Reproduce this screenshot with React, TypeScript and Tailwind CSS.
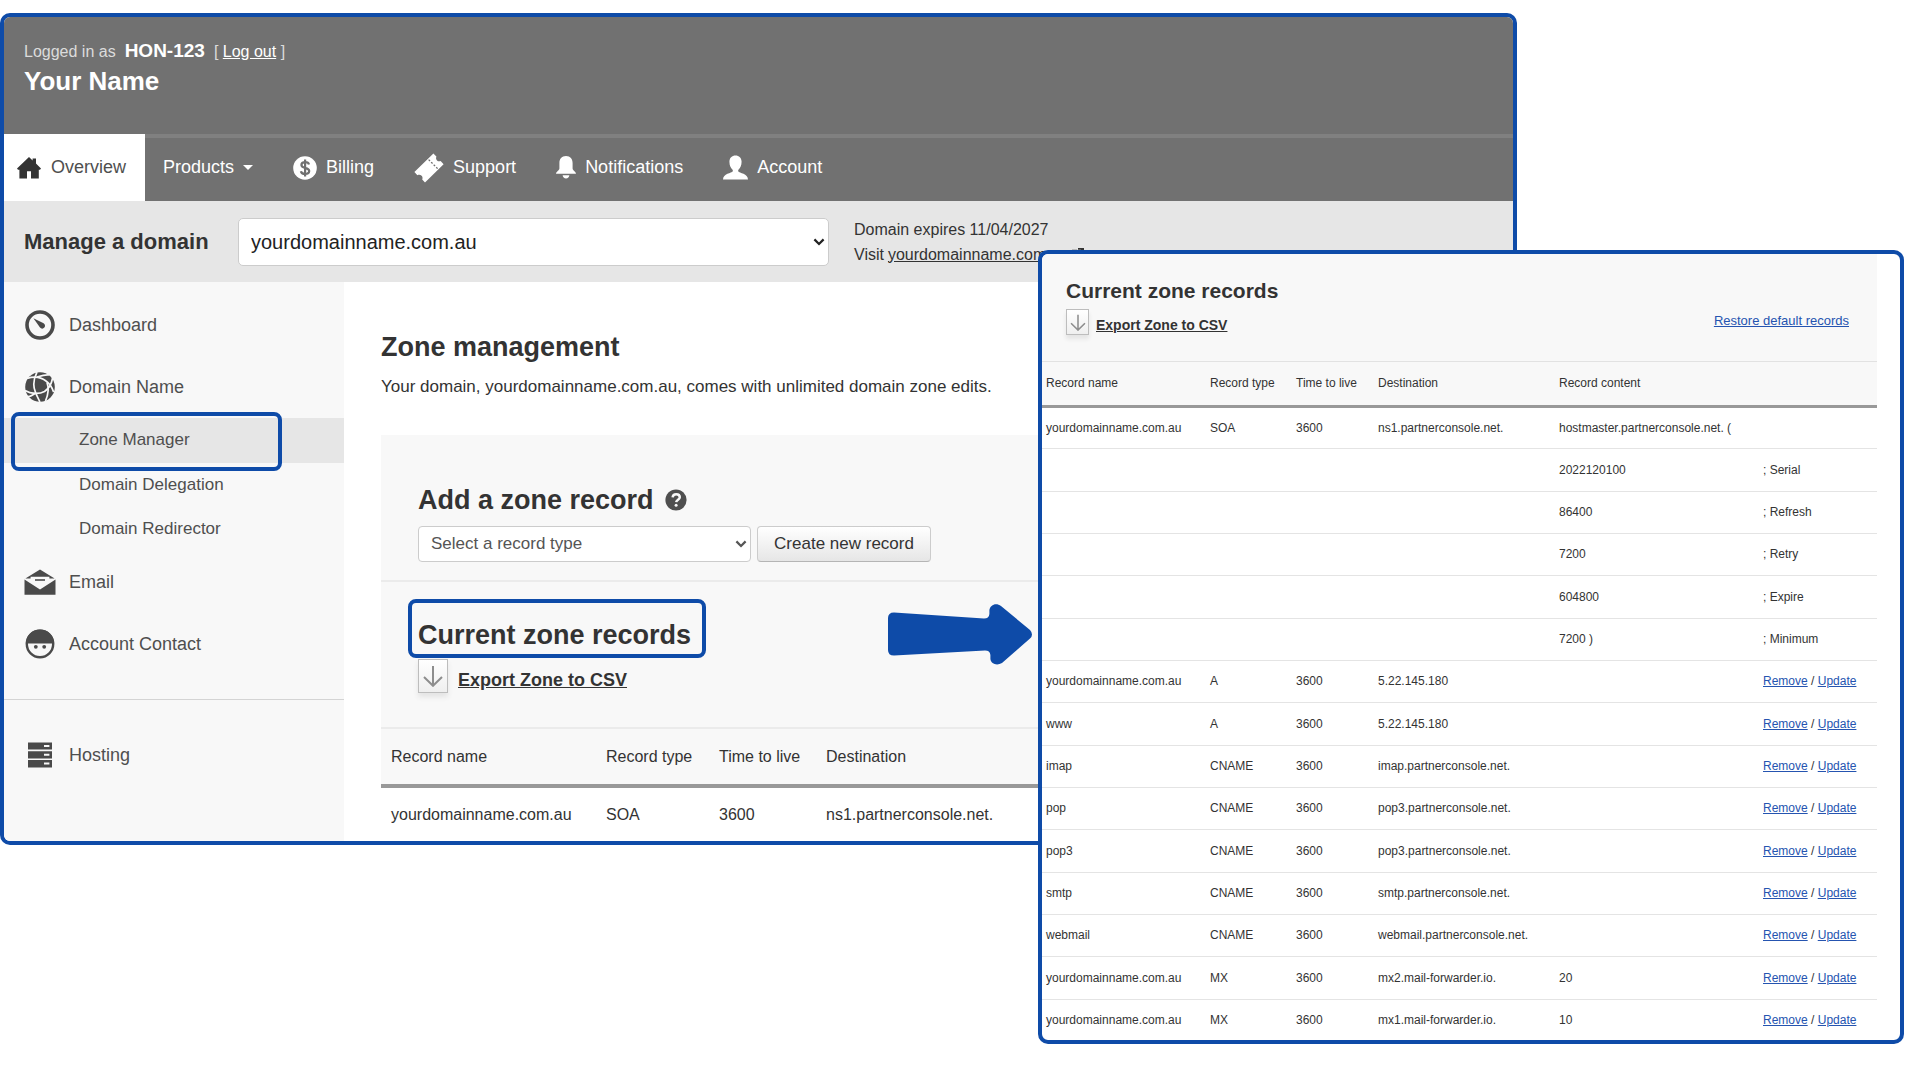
import type { ReactNode } from "react";

function HomeIcon() {
  return (
    <svg width="24" height="22" viewBox="0 0 24 22" fill="#333333" aria-hidden="true">
      <path d="M12 0 15.6 3.4V1.4H19V6.6L24 11.6 23 12.8H21.8V21.6H14V14.2H10V21.6H2.4V12.8H1L0 11.6Z" />
    </svg>
  );
}

function BillingIcon() {
  return (
    <svg width="24" height="24" viewBox="0 0 24 24" fill="none" aria-hidden="true">
      <circle cx="12" cy="12" r="11.8" fill="#ffffff" />
      <path
        d="M16 8.4C15.6 6.8 14 6.2 12.2 6.2 10 6.2 8.4 7.2 8.4 9 8.4 13 16.2 10.8 16.2 15 16.2 16.9 14.4 17.9 12.2 17.9 10 17.9 8.2 17 7.9 15.2M12.1 3.6V20.4"
        stroke="#707070"
        strokeWidth="2.2"
      />
    </svg>
  );
}

function TicketIcon() {
  return (
    <svg width="30" height="30" viewBox="0 0 30 30" fill="none" aria-hidden="true">
      <path
        d="M19.4.4 22.4 3.6C21.8 5.2 22 6.4 23 7.4 24 8.4 25.2 8.6 26.6 8L29.6 11.2 11 29.6 8.2 26.6C8.8 25.2 8.6 23.8 7.6 22.8 6.4 21.6 5 21.4 3.4 22.2L.4 19Z"
        fill="#ffffff"
      />
      <path d="M14.6 6.6 23.6 15.6" stroke="#707070" strokeWidth="1.3" strokeDasharray="2 1.6" />
    </svg>
  );
}

function BellIcon() {
  return (
    <svg width="20" height="23" viewBox="0 0 20 23" fill="#ffffff" aria-hidden="true">
      <path d="M10 0C14.4 0 16.6 3 16.6 7V12.4C16.6 14.4 20 15.4 20 17.8H0C0 15.4 3.4 14.4 3.4 12.4V7C3.4 3 5.6 0 10 0Z" />
      <path d="M6.6 19.2H13.4C13.2 21.2 11.8 22.4 10 22.4S6.8 21.2 6.6 19.2Z" />
    </svg>
  );
}

function PersonIcon() {
  return (
    <svg width="25" height="25" viewBox="0 0 25 25" fill="#ffffff" aria-hidden="true">
      <path d="M12.5.4C16 .4 18.6 2.8 18.6 6.8 18.6 10.6 17 13.6 15.2 15V16.2C16.4 18.2 25 18.4 25 24.6H0C0 18.4 8.6 18.2 9.8 16.2V15C8 13.6 6.4 10.6 6.4 6.8 6.4 2.8 9 .4 12.5.4Z" />
    </svg>
  );
}

function GaugeIcon() {
  return (
    <svg width="30" height="30" viewBox="0 0 30 30" fill="none" aria-hidden="true">
      <circle cx="15" cy="15" r="13" stroke="#4a4a4a" strokeWidth="3.6" />
      <path d="M8.4 8.2 18.6 13.2C20.2 14.4 20.4 16.2 19.4 17.6 18.2 19 16.2 19 15 17.6Z" fill="#4a4a4a" />
    </svg>
  );
}

function GlobeIcon() {
  return (
    <svg width="30" height="30" viewBox="0 0 30 30" fill="none" aria-hidden="true">
      <circle cx="15" cy="15" r="14.8" fill="#4a4a4a" />
      <g stroke="#f8f8f8" strokeWidth="1.7">
        <path d="M2 6.500C8 4.500 15 4.500 21 9 24.500 11.500 27 15 28.600 20" />
        <path d="M12 0C9 6 7.400 13 10.400 20 11.400 23 13 26 15 30" />
        <path d="M0 18.500C6 22 14 22.500 19.500 19.500 24 16.500 26.500 12 27.600 6" />
        <path d="M12 5C17 3.500 20 2.500 24 3" />
        <path d="M22 10.500C24 16 23.500 22 20.500 29" />
        <path d="M10.600 21C8 23 6 24.500 3 24.600" />
      </g>
    </svg>
  );
}

function MailIcon() {
  return (
    <svg width="32" height="26" viewBox="0 0 32 26" fill="none" aria-hidden="true">
      <path d="M16 .4 30.6 9.4H1.4Z" fill="#4a4a4a" />
      <path d="M.5 10.4 16 20.4 31.5 10.4V25.8H.5Z" fill="#4a4a4a" />
      <path d="M6.6 7.8H25.4V13L16 19.4 6.6 13Z" fill="#f8f8f8" />
      <path d="M11 11H21" stroke="#4a4a4a" strokeWidth="1.6" />
    </svg>
  );
}

function FaceIcon() {
  return (
    <svg width="30" height="30" viewBox="0 0 30 30" fill="none" aria-hidden="true">
      <circle cx="15" cy="15" r="13.2" stroke="#4a4a4a" strokeWidth="2.4" />
      <path d="M.8 14.6C.8 6.6 7.2.6 15 .6S29.2 6.6 29.2 14.6Z" fill="#4a4a4a" />
      <circle cx="10.8" cy="17.8" r="1.9" fill="#4a4a4a" />
      <circle cx="19.2" cy="17.8" r="1.9" fill="#4a4a4a" />
    </svg>
  );
}

function ServerIcon() {
  return (
    <svg width="24" height="26" viewBox="0 0 24 26" aria-hidden="true">
      <path d="M0 .4H24V7.6H0ZM0 9.2H24V16.4H0ZM0 18H24V25.4H0Z" fill="#4a4a4a" />
      <path d="M16 3H21.4V5H16ZM16 11.8H21.4V13.8H16ZM16 20.6H21.4V22.6H16Z" fill="#f8f8f8" />
    </svg>
  );
}

function HelpIcon() {
  return (
    <svg width="22" height="22" viewBox="0 0 22 22" fill="none" aria-hidden="true">
      <circle cx="11" cy="11" r="10.6" fill="#4f4f4f" />
      <path
        d="M7.6 8.4C7.8 6.4 9 5.2 11.2 5.2 13.4 5.2 14.8 6.4 14.8 8.2 14.8 10.6 11.4 10.8 11.2 13.2"
        stroke="#f8f8f8"
        strokeWidth="2.5"
      />
      <circle cx="11.1" cy="16.2" r="1.5" fill="#f8f8f8" />
    </svg>
  );
}

function DownArrow({ className }: { className: string }) {
  return (
    <svg className={className} viewBox="0 0 20 22" fill="none" stroke="#8d8d8d" strokeWidth="2" aria-hidden="true">
      <path d="M10 1V20.4M1 12 10 20.8 19 12" />
    </svg>
  );
}

function ExternalIcon() {
  return (
    <svg width="12" height="12" viewBox="0 0 14 14" fill="none" stroke="#333333" strokeWidth="2" aria-hidden="true">
      <path d="M6 3H1V13H11V8M7 1H13V7M13 1 6 8" />
    </svg>
  );
}

function Chevron({ stroke }: { stroke: string }) {
  return (
    <svg
      className="pointer-events-none absolute right-1 top-1/2 -translate-y-1/2"
      width="12"
      height="8"
      viewBox="0 0 12 8"
      fill="none"
      aria-hidden="true"
    >
      <path d="M1.4 1.4 6 6 10.6 1.4" stroke={stroke} strokeWidth="2.2" />
    </svg>
  );
}

function NavItem({ icon, label }: { icon: ReactNode; label: string }) {
  return (
    <a href="#" className="flex items-center gap-[9px]">
      {icon}
      {label}
    </a>
  );
}

function SideItem({ icon, label }: { icon: ReactNode; label: string }) {
  return (
    <a href="#" className="flex h-[62px] items-center gap-[13px] pl-5 text-[18px]">
      <span className="flex w-8 justify-center">{icon}</span>
      {label}
    </a>
  );
}

const subItem = "flex h-11 items-center pl-[75px] text-[17px]";

type ZoneRecord = {
  name?: string;
  type?: string;
  ttl?: string;
  destination?: string;
  content?: string;
  note?: string;
};

const records: ZoneRecord[] = [
  {
    name: "yourdomainname.com.au",
    type: "SOA",
    ttl: "3600",
    destination: "ns1.partnerconsole.net.",
    content: "hostmaster.partnerconsole.net. (",
    note: "",
  },
  { content: "2022120100", note: "; Serial" },
  { content: "86400", note: "; Refresh" },
  { content: "7200", note: "; Retry" },
  { content: "604800", note: "; Expire" },
  { content: "7200 )", note: "; Minimum" },
  { name: "yourdomainname.com.au", type: "A", ttl: "3600", destination: "5.22.145.180" },
  { name: "www", type: "A", ttl: "3600", destination: "5.22.145.180" },
  { name: "imap", type: "CNAME", ttl: "3600", destination: "imap.partnerconsole.net." },
  { name: "pop", type: "CNAME", ttl: "3600", destination: "pop3.partnerconsole.net." },
  { name: "pop3", type: "CNAME", ttl: "3600", destination: "pop3.partnerconsole.net." },
  { name: "smtp", type: "CNAME", ttl: "3600", destination: "smtp.partnerconsole.net." },
  { name: "webmail", type: "CNAME", ttl: "3600", destination: "webmail.partnerconsole.net." },
  { name: "yourdomainname.com.au", type: "MX", ttl: "3600", destination: "mx2.mail-forwarder.io.", content: "20" },
  { name: "yourdomainname.com.au", type: "MX", ttl: "3600", destination: "mx1.mail-forwarder.io.", content: "10" },
];

function Sidebar() {
  return (
    <aside className="w-[340px] shrink-0 bg-[#f8f8f8] pt-3 text-[#4f4f4f]">
      <nav aria-label="Domain tools">
        <SideItem icon={<GaugeIcon />} label="Dashboard" />
        <SideItem icon={<GlobeIcon />} label="Domain Name" />
        <div className="relative bg-[#e6e6e6] pb-px">
          <a href="#" className={subItem}>
            Zone Manager
          </a>
          <div className="pointer-events-none absolute -top-[6px] left-[7px] h-[59px] w-[271px] rounded-lg border-4 border-[#0e4ba8]" />
        </div>
        <a href="#" className={subItem}>
          Domain Delegation
        </a>
        <a href="#" className={subItem}>
          Domain Redirector
        </a>
        <SideItem icon={<MailIcon />} label="Email" />
        <SideItem icon={<FaceIcon />} label="Account Contact" />
        <div className="mt-6 border-t border-[#d4d4d4] pt-6">
          <SideItem icon={<ServerIcon />} label="Hosting" />
        </div>
      </nav>
    </aside>
  );
}

function ConsolePanel() {
  return (
    <section className="mr-[403px] overflow-hidden rounded-[10px] border-4 border-[#0e4ba8] bg-white">
      <header className="bg-[#717171] text-white">
        <div className="px-5 pb-9 pt-[22px]">
          <p className="flex items-baseline gap-[9px] text-[16px] leading-6 text-[#dcdcdc]">
            Logged in as <strong className="text-[19px] text-white">HON-123</strong>
            <span>
              [{" "}
              <a href="#" className="text-white underline">
                Log out
              </a>{" "}
              ]
            </span>
          </p>
          <p className="text-[26px] font-bold leading-[34px]">Your Name</p>
        </div>
        <nav aria-label="Main" className="flex h-[67px] text-[18px]">
          <a href="#" className="flex w-[141px] items-center gap-[10px] bg-white pl-[13px] text-[#4f4f4f]">
            <HomeIcon />
            Overview
          </a>
          <div className="flex flex-1 items-center gap-10 pl-[18px] shadow-[inset_0_4px_0_#808080]">
            <button type="button" className="flex items-center gap-[9px]">
              Products
              <svg width="10" height="5" viewBox="0 0 10 5" fill="#ffffff" aria-hidden="true">
                <path d="M0 0H10L5 5Z" />
              </svg>
            </button>
            <NavItem icon={<BillingIcon />} label="Billing" />
            <NavItem icon={<TicketIcon />} label="Support" />
            <NavItem icon={<BellIcon />} label="Notifications" />
            <NavItem icon={<PersonIcon />} label="Account" />
          </div>
        </nav>
      </header>

      <div className="flex h-[81px] items-center bg-[#e6e6e6] pl-5 text-[#333333]">
        <label htmlFor="domain" className="w-[214px] text-[22px] font-bold">
          Manage a domain
        </label>
        <div className="relative w-[591px]">
          <select
            id="domain"
            className="h-12 w-full appearance-none rounded-[5px] border border-[#cccccc] bg-white pl-3 text-[20px] text-[#222222]"
          >
            <option>yourdomainname.com.au</option>
          </select>
          <Chevron stroke="#222222" />
        </div>
        <div className="ml-[25px] text-[16px] leading-[25px]">
          <p>Domain expires 11/04/2027</p>
          <p className="flex items-center gap-1">
            Visit{" "}
            <a href="#" className="underline">
              yourdomainname.com.au
            </a>
            <ExternalIcon />
          </p>
        </div>
      </div>

      <div className="flex">
        <Sidebar />
        <main className="min-w-0 flex-1 pl-[37px] pt-[47px] text-[#333333]">
          <h1 className="text-[27px] font-bold leading-9">Zone management</h1>
          <p className="mt-2 text-[17px] leading-7">
            Your domain, yourdomainname.com.au, comes with unlimited domain zone edits.
          </p>
          <div className="mt-[34px] bg-[#f8f8f8]">
            <div className="border-b-2 border-[#ebebeb] pb-[18px] pl-[37px] pt-[47px]">
              <h2 className="flex items-center gap-[11px] text-[27px] font-bold leading-9">
                Add a zone record <HelpIcon />
              </h2>
              <div className="mt-2 flex gap-[6px]">
                <div className="relative w-[333px]">
                  <select
                    aria-label="Record type"
                    className="h-9 w-full appearance-none rounded-[4px] border border-[#cccccc] bg-white pl-3 text-[17px] text-[#555555]"
                  >
                    <option>Select a record type</option>
                  </select>
                  <Chevron stroke="#555555" />
                </div>
                <button
                  type="button"
                  className="h-9 w-[174px] rounded-[4px] border border-[#cccccc] border-b-[#b5b5b5] bg-linear-to-b from-white to-[#e6e6e6] text-[17px]"
                >
                  Create new record
                </button>
              </div>
            </div>
            <div className="border-b-2 border-[#ebebeb] pb-[34px] pl-[37px] pt-[35px]">
              <h2 className="relative w-fit text-[27px] font-bold leading-9">
                Current zone records
                <span className="pointer-events-none absolute -left-[10px] -top-[18px] h-[59px] w-[298px] rounded-lg border-4 border-[#0e4ba8]" />
              </h2>
              <a href="#" className="mt-[6px] flex items-end gap-[10px]">
                <span className="flex h-[34px] w-[30px] items-center justify-center border border-[#bdbdbd] bg-linear-to-b from-white to-[#efefef] shadow-[0_4px_5px_#e4e4e4]">
                  <DownArrow className="h-[22px] w-5" />
                </span>
                <span className="text-[18px] font-bold leading-[26px] underline">Export Zone to CSV</span>
              </a>
            </div>
            <table className="w-full table-fixed border-collapse bg-white text-left text-[16px]">
              <thead className="border-b-4 border-[#999999] bg-[#f8f8f8]">
                <tr className="h-[57px]">
                  <th className="w-[215px] pl-[10px] font-normal">Record name</th>
                  <th className="w-[113px] pl-[10px] font-normal">Record type</th>
                  <th className="w-[107px] pl-[10px] font-normal">Time to live</th>
                  <th className="pl-[10px] font-normal">Destination</th>
                </tr>
              </thead>
              <tbody>
                <tr className="h-[55px]">
                  <td className="pl-[10px]">yourdomainname.com.au</td>
                  <td className="pl-[10px]">SOA</td>
                  <td className="pl-[10px]">3600</td>
                  <td className="pl-[10px]">ns1.partnerconsole.net.</td>
                </tr>
              </tbody>
            </table>
          </div>
        </main>
      </div>
    </section>
  );
}

function RecordsPanel() {
  return (
    <section className="overflow-hidden rounded-[10px] border-4 border-[#0e4ba8] bg-white pr-[23px] text-[#333333]">
      <div className="flex justify-between border-b border-[#e2e2e2] bg-[#f8f8f8] pb-[26px] pl-6 pr-7 pt-[23px]">
        <div>
          <h2 className="text-[21px] font-bold leading-7">Current zone records</h2>
          <a href="#" className="mt-1 flex items-end gap-[7px]">
            <span className="flex h-[26px] w-[23px] items-center justify-center border border-[#bdbdbd] bg-linear-to-b from-white to-[#efefef] shadow-[0_4px_4px_#e4e4e4]">
              <DownArrow className="h-[17px] w-4" />
            </span>
            <span className="text-[14px] font-bold leading-5 underline">Export Zone to CSV</span>
          </a>
        </div>
        <a href="#" className="self-end pb-1 text-[13px] leading-5 text-[#2554b0] underline">
          Restore default records
        </a>
      </div>
      <table className="w-full table-fixed border-collapse text-left text-[12px]">
        <thead className="border-b-3 border-[#999999] bg-[#f8f8f8]">
          <tr className="h-11">
            <th className="w-[164px] pl-1 font-normal">Record name</th>
            <th className="w-[86px] pl-1 font-normal">Record type</th>
            <th className="w-[82px] pl-1 font-normal">Time to live</th>
            <th className="w-[181px] pl-1 font-normal">Destination</th>
            <th className="w-[204px] pl-1 font-normal">Record content</th>
            <th aria-label="Actions" />
          </tr>
        </thead>
        <tbody>
          {records.map((r, i) => (
            <tr key={i} className="h-[42px] border-b border-[#e4e4e4] nth-[3n+2]:h-[43px] last:h-[41px] last:border-b-0">
              <td className="pl-1">{r.name}</td>
              <td className="pl-1">{r.type}</td>
              <td className="pl-1">{r.ttl}</td>
              <td className="pl-1">{r.destination}</td>
              <td className="pl-1">{r.content}</td>
              <td className="pl-1">
                {r.note === undefined ? (
                  <>
                    <a href="#" className="text-[#2554b0] underline">
                      Remove
                    </a>{" "}
                    /{" "}
                    <a href="#" className="text-[#2554b0] underline">
                      Update
                    </a>
                  </>
                ) : (
                  r.note
                )}
              </td>
            </tr>
          ))}
        </tbody>
      </table>
    </section>
  );
}

export default function App() {
  return (
    <div className="relative min-h-screen bg-white pt-[13px] font-['Liberation_Sans',Arial,sans-serif]">
      <ConsolePanel />
      <div className="absolute right-4 top-[250px] w-[866px]">
        <RecordsPanel />
        <svg
          className="absolute -left-[150px] top-[354px]"
          width="144"
          height="61"
          viewBox="0 0 144 61"
          fill="#0e4ba8"
          aria-hidden="true"
        >
          <path d="M6 8.4 96 14.6Q101 14.6 101.4 10V6C102 1 108 -2 113 2L142 26Q146 30.5 142 34.5L114 59C109 62 103 60 102.4 55V51Q102 46.6 97 46.6L6 51.6Q0 51.6 0 46V14Q0 8.4 6 8.4Z" />
        </svg>
      </div>
    </div>
  );
}
